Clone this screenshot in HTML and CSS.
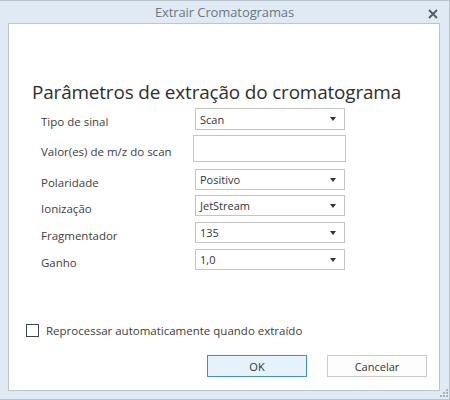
FILE: index.html
```html
<!DOCTYPE html>
<html>
<head>
<meta charset="utf-8">
<link rel="stylesheet" href="styles.css">
</head>
<body>
<div class="window">
  <div class="titlebar">
    <span class="title">Extrair Cromatogramas</span>
    <svg class="close" width="10" height="10" viewBox="0 0 10 10"><path d="M1 1 L9 9 M9 1 L1 9" stroke="#55595e" stroke-width="1.8" fill="none"/></svg>
  </div>
  <div class="panel">
    <h1 class="heading">Parâmetros de extração do cromatograma</h1>
    <div class="form">
      <div class="row r1"><span class="label">Tipo de sinal</span><div class="select">Scan<span class="arrow"></span></div></div>
      <div class="row r2"><span class="label">Valor(es) de m/z do scan</span><div class="input"></div></div>
      <div class="row r3"><span class="label">Polaridade</span><div class="select">Positivo<span class="arrow"></span></div></div>
      <div class="row r4"><span class="label">Ionização</span><div class="select">JetStream<span class="arrow"></span></div></div>
      <div class="row r5"><span class="label">Fragmentador</span><div class="select">135<span class="arrow"></span></div></div>
      <div class="row r6"><span class="label">Ganho</span><div class="select">1,0<span class="arrow"></span></div></div>
    </div>
    <label class="check"><span class="box"></span><span class="check-text">Reprocessar automaticamente quando extraído</span></label>
    <div class="buttons">
      <button class="btn ok">OK</button>
      <button class="btn">Cancelar</button>
    </div>
    <svg class="grip" width="10" height="10" viewBox="0 0 10 10" fill="#a9b3bd">
      <rect x="8" y="0" width="2" height="2"/>
      <rect x="5" y="3" width="2" height="2"/><rect x="8" y="3" width="2" height="2"/>
      <rect x="2" y="6" width="2" height="2"/><rect x="5" y="6" width="2" height="2"/><rect x="8" y="6" width="2" height="2"/>
    </svg>
  </div>
</div>
</body>
</html>
```
FILE: styles.css
```css
html, body {
  margin: 0;
  padding: 0;
}
body {
  font-family: "Open Sans", "Noto Sans", sans-serif;
  width: 450px;
  height: 400px;
  overflow: hidden;
}
.window {
  box-sizing: border-box;
  width: 450px;
  height: 400px;
  background: #dfeaf4;
  border-top: 1px solid #b9c3cc;
  border-right: 1px solid #b9c3cc;
  border-bottom: 1px solid #b9c3cc;
  display: flex;
  flex-direction: column;
  position: relative;
}
.titlebar {
  height: 22px;
  display: flex;
  align-items: center;
  justify-content: center;
  position: relative;
}
.title {
  font-size: 13px;
  color: #6d7780;
  letter-spacing: -0.1px;
}
.close {
  position: absolute;
  right: 11px;
  top: 8px;
}
.panel {
  box-sizing: border-box;
  margin-left: 8px;
  width: 432px;
  height: 368px;
  background: #fff;
  border: 1px solid #bfc5cb;
  padding: 0 0 0 23px;
  display: flex;
  flex-direction: column;
  position: relative;
}
.heading {
  margin: 55px 0 0 0;
  font-weight: normal;
  font-size: 18.9px;
  line-height: 26px;
  color: #2e2e2e;
  letter-spacing: -0.15px;
}
.form {
  display: flex;
  flex-direction: column;
  margin-top: 3px;
  padding-left: 9px;
}
.row {
  display: flex;
  align-items: center;
}
.label {
  width: 154px;
  font-size: 11.5px;
  color: #3d3d3d;
  padding-top: 5px;
}
.select {
  box-sizing: border-box;
  width: 150px;
  height: 21px;
  border: 1px solid #c4c4c4;
  font-size: 11px;
  color: #333;
  padding-left: 4px;
  display: flex;
  align-items: center;
  position: relative;
}
.arrow {
  position: absolute;
  right: 8px;
  top: 8px;
  width: 0;
  height: 0;
  border-left: 3px solid transparent;
  border-right: 3px solid transparent;
  border-top: 4px solid #333;
}
.input {
  box-sizing: border-box;
  width: 153px;
  height: 27px;
  margin-left: -2px;
  border: 1px solid #c4c4c4;
}
.r1 .select { height: 22px; }
.r2 { margin-top: 5px; }
.r3 { margin-top: 7px; }
.r4 { margin-top: 5px; }
.r5 { margin-top: 6px; }
.r6 { margin-top: 6px; }
.check {
  display: flex;
  align-items: center;
  margin-top: 53px;
  margin-left: -6px;
}
.box {
  box-sizing: border-box;
  width: 13px;
  height: 13px;
  border: 1px solid #3b4550;
  margin-right: 7px;
}
.check-text {
  font-size: 11.5px;
  color: #3d3d3d;
}
.buttons {
  display: flex;
  justify-content: flex-end;
  gap: 20px;
  margin-top: 17px;
  padding-right: 12px;
}
.btn {
  box-sizing: border-box;
  width: 100px;
  height: 22px;
  font-family: "Open Sans", "Noto Sans", sans-serif;
  font-size: 11px;
  color: #333;
  background: #fdfdfd;
  border: 1px solid #c8c8c8;
  padding: 0;
}
.btn.ok {
  background: #e5f1fb;
  border-color: #3e8ed0;
}
.grip {
  position: absolute;
  right: -9px;
  bottom: -9px;
}
```
